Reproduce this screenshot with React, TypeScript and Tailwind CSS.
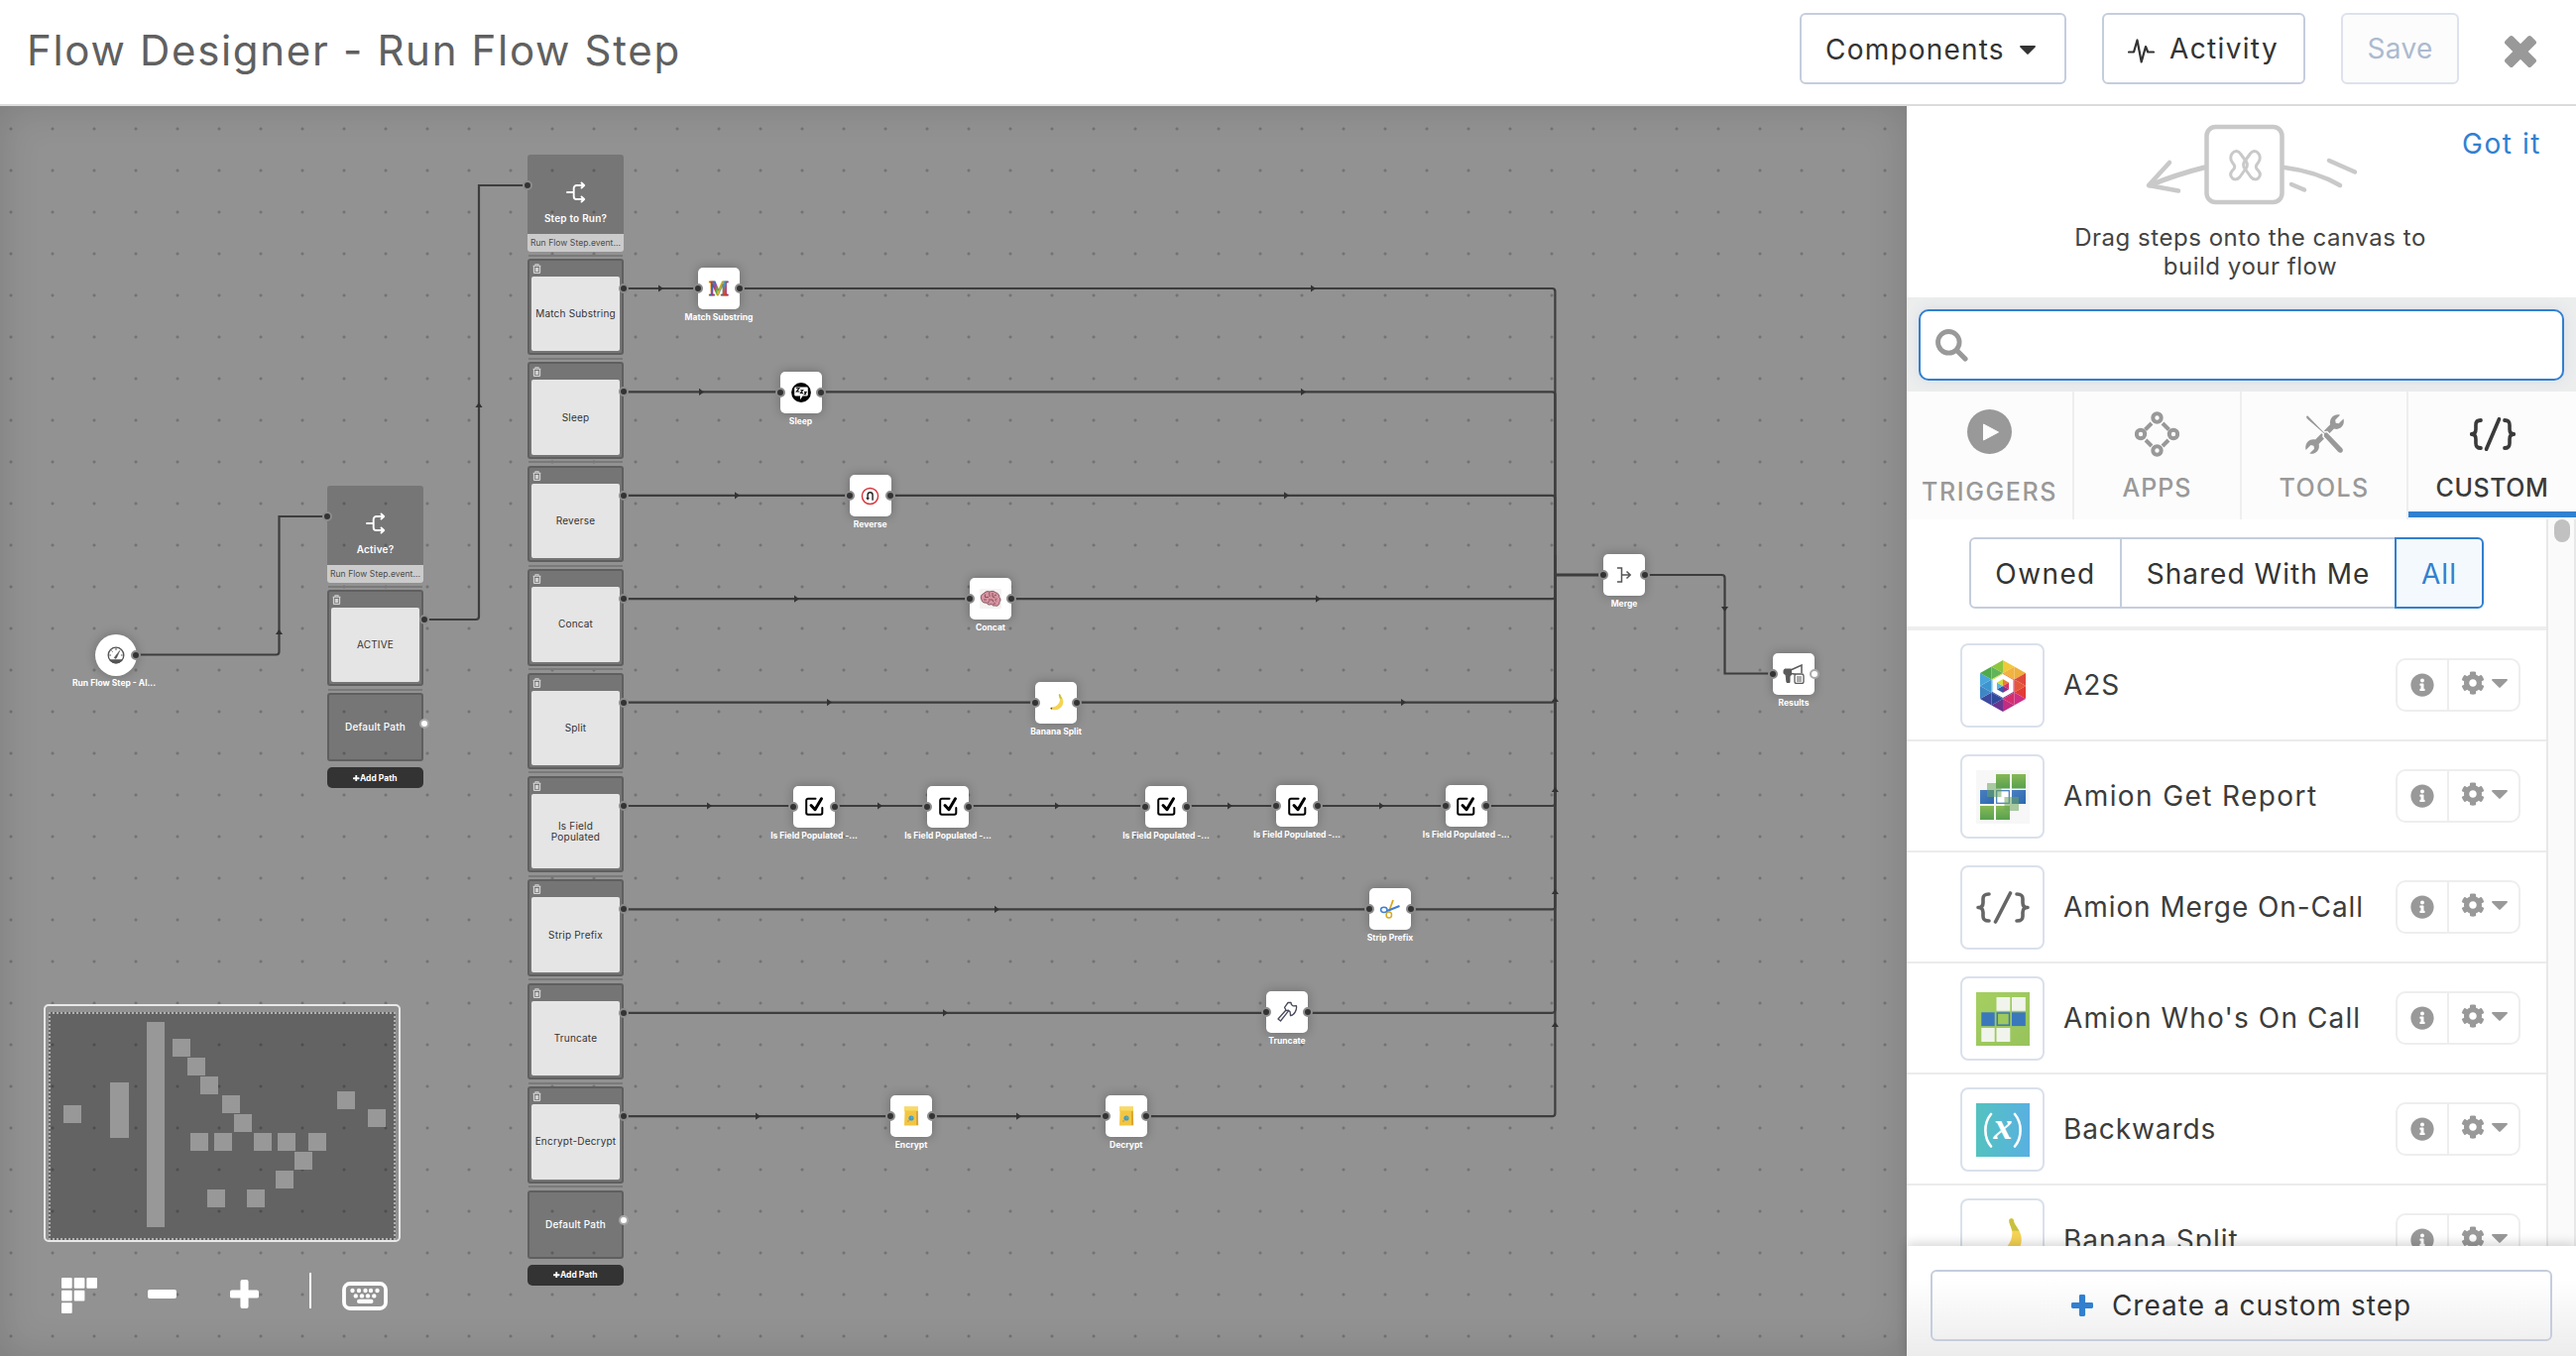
import React from 'react';
import { FaCog, FaInfoCircle } from 'react-icons/fa';

type IconProps = { className?: string };

/* ---------- Shared glyphs ---------- */

const Caret = ({ className = '' }: IconProps) => (
  <svg viewBox="0 0 16 9" className={className} fill="currentColor"><path d="M1 0h14a.9.9 0 0 1 .7 1.5L8.7 8.600a1 1 0 0 1-1.400 0L.3 1.500A.9.9 0 0 1 1 0z" /></svg>
);

const PlusGlyph = ({ className = '' }: IconProps) => (
  <svg viewBox="0 0 30 30" className={className} fill="currentColor">
    <rect x="0" y="10.800" width="30" height="8.400" rx="2" />
    <rect x="10.800" y="0" width="8.400" height="30" rx="2" />
  </svg>
);

const CodeIcon = ({ className = '', weight = 3.6 }: IconProps & { weight?: number }) => (
  <svg viewBox="0 0 54 34" preserveAspectRatio="none" className={className} fill="none" stroke="currentColor" strokeWidth={weight} strokeLinecap="round" strokeLinejoin="round">
    <path d="M13 3c-4.500 0-6 1.500-6 5v4c0 3-1.500 5-5 5 3.500 0 5 2 5 5v4c0 3.500 1.500 5 6 5" />
    <path d="M41 3c4.500 0 6 1.500 6 5v4c0 3 1.500 5 5 5-3.500 0-5 2-5 5v4c0 3.500-1.500 5-6 5" />
    <path d="M34.500 2 19.500 32" />
  </svg>
);

const SplitIcon = ({ className = '' }: IconProps) => (
  <svg viewBox="0 0 20 22" className={className} fill="none" stroke="currentColor" strokeWidth="1.900" strokeLinecap="round" strokeLinejoin="round">
    <path d="M1 11h6.500M17.500 4h-7a2.800 2.800 0 0 0-2.800 2.800v8.400a2.800 2.800 0 0 0 2.800 2.800h7M15.500 1.500l2.700 2.500-2.700 2.500M15.500 15.500l2.700 2.500-2.700 2.500" />
  </svg>
);

const TrashIcon = ({ className = '' }: IconProps) => (
  <svg viewBox="0 0 9 10" className={className} fill="none" stroke="currentColor" strokeWidth="1.100">
    <path d="M.6 2.300h7.800M3 2V.8h3V2M1.400 2.500v6.200c0 .5.3.7.7.7h4.800c.4 0 .7-.2.7-.7V2.500M3.300 4v4M4.500 4v4M5.700 4v4" />
  </svg>
);

/* ---------- Node artwork (21 x 21) ---------- */

const Gauge = () => (
  <svg viewBox="0 0 20 20" className="size-[18px]" fill="none" stroke="#555" strokeWidth="1.500">
    <circle cx="10" cy="10" r="8.700" />
    <path d="M3.800 15.500h12.400A8.500 8.500 0 0 1 10 18.600a8.500 8.500 0 0 1-6.200-3.100z" fill="#555" />
    <path d="M10 2v2.500M2.500 10h2M15.500 10h2M5 5l1.200 1.200" strokeWidth="1.100" />
    <path d="m14.300 4.800-5 6.200-1.300 2 2 .8 1.200-2z" fill="#555" strokeWidth=".6" />
  </svg>
);

const LetterM = () => (
  <svg viewBox="0 0 22 26" className="h-[26px] w-[22px]">
    <defs>
      <linearGradient id="mfill" x1="0" y1="0" x2="1" y2=".35">
        <stop offset=".05" stopColor="#f0a02c" /><stop offset=".18" stopColor="#e0402c" /><stop offset=".3" stopColor="#2f83d6" />
        <stop offset=".42" stopColor="#e0307f" /><stop offset=".54" stopColor="#58b848" /><stop offset=".66" stopColor="#f0c830" />
        <stop offset=".8" stopColor="#3a9ad8" /><stop offset=".95" stopColor="#e0402c" />
      </linearGradient>
    </defs>
    <text x="11" y="19.500" textAnchor="middle" fontFamily="Liberation Serif, serif" fontWeight="700" fontSize="20.500" fill="url(#mfill)" stroke="url(#mfill)" strokeWidth="1.200">M</text>
    <text x="11" y="19.500" textAnchor="middle" fontFamily="Liberation Serif, serif" fontWeight="700" fontSize="20.500" fill="none" stroke="#3a3030" strokeOpacity=".55" strokeWidth=".5" aria-hidden="true">M</text>
  </svg>
);

const SleepArt = () => (
  <svg viewBox="0 0 20 20" className="size-5">
    <circle cx="10" cy="10" r="9.900" fill="#000" />
    <path d="M4.500 4.600h11a1.300 1.300 0 0 1 1.300 1.300v6.300a1.300 1.300 0 0 1-1.300 1.300H11.500L9 17.200v-3.700H4.500a1.300 1.300 0 0 1-1.300-1.300V5.900a1.300 1.300 0 0 1 1.300-1.300z" fill="#fff" />
    <path d="M5 5.800h3L5.300 9h3M9.300 7.700h2.400L9.500 10.500H12M13 9.500h2l-1.800 2.300h2" fill="none" stroke="#000" strokeWidth="1.100" />
  </svg>
);

const ReverseArt = () => (
  <svg viewBox="0 0 20 20" className="size-[19px]" fill="none">
    <circle cx="10" cy="10" r="8.500" stroke="#d8343a" strokeWidth="1.500" fill="#fff" />
    <path d="M12.700 14.500V8.700a2.600 2.600 0 0 0-5.200 0v4" stroke="#222" strokeWidth="1.500" />
    <path d="M5.600 11.700h3.800l-1.900 2.800z" fill="#222" />
  </svg>
);

const BrainArt = () => (
  <svg viewBox="0 0 22 20" className="h-[20px] w-[22px]" fill="none">
    <rect width="22" height="20" rx="1" fill="#f4f3f2" />
    <path d="M2 11C.5 8.500 1.500 5.500 4 5c1-2 4-3 6-2 2-1 5-.8 6 .8 2.500.3 4 2.500 3.800 4.600 1.700 1.600 1.400 4 .2 5.100.3 2.500-2 4.500-4.300 3.500-1.700.4-3-.2-3.700-1.500-2 1.200-4.400.4-5-1.400C4.500 14.400 2 13.500 2 11z" fill="#d793a0" stroke="#6b3d49" strokeWidth=".8" />
    <path d="M5.500 5.500v3H9M7 11H4M10 3.500c-1 2 .5 2.500 0 4.500M13 4v4l2.500 1M17 6l-2.500 1M9 11h4l1 2.500M17.500 10c-1.500 0-2 1.500-1 2.500M8 14l2-1.500M13.500 15.500l2.500-1" stroke="#74424f" strokeWidth=".8" />
  </svg>
);

const BananaArt = ({ className = 'size-5' }: IconProps) => (
  <svg viewBox="0 0 20 20" className={className}>
    <path d="M12.600 1.500c.8-.6 1.500-.2 1.600.6.1 1.800 3.300 4 3 7.800-.4 5-4.800 8.600-10 8.200-1.800-.1-3.300-.9-3.400-1.700 0-.8.600-1 1.500-1.100 4.500-.6 8.500-3.800 8.300-8.800-.1-2-1.700-3.800-1-5z" fill="#f5d355" />
    <path d="M12.600 1.500c.8-.6 1.500-.2 1.600.6.1 1.200 1.200 2.400 2.100 4L13.500 6c-.2-1.700-1.600-3.500-.9-4.500z" fill="#c8c13f" />
    <path d="M4 15.700c-.8.600-.2 1.800.9 2l.7-2.100z" fill="#5d4a26" />
  </svg>
);

const CheckArt = () => (
  <svg viewBox="0 0 21 21" className="size-[21px]" fill="none" stroke="#000" strokeLinejoin="round" strokeLinecap="round">
    <path d="M11.500 2.700H4A1.800 1.800 0 0 0 2.200 4.500V17A1.800 1.800 0 0 0 4 18.800h12.500a1.800 1.800 0 0 0 1.800-1.800v-5" strokeWidth="2" />
    <path d="m7 9.500 4 4.200 6.500-10.900" strokeWidth="3" />
  </svg>
);

const ScissorsArt = () => (
  <svg viewBox="0 0 22 20" className="h-5 w-[22px]" fill="none">
    <path d="M10 12 14 1" stroke="#d9a91f" strokeWidth="1.800" /><path d="m8 12 12.500-5" stroke="#3f7fd0" strokeWidth="2" />
    <ellipse cx="9.800" cy="16" rx="2.700" ry="3" stroke="#d9a91f" strokeWidth="1.500" />
    <ellipse cx="4.800" cy="10.800" rx="3.200" ry="2.600" stroke="#3f7fd0" strokeWidth="1.500" />
  </svg>
);

const AxeArt = () => (
  <svg viewBox="0 0 22 22" className="size-[22px]" fill="#fff" stroke="#4a4a5e" strokeWidth="1.300" strokeLinejoin="round">
    <path d="m11.300 7.500 1.800 1.700L4.500 20l-2.500-2z" />
    <path d="M8.500 6.300 12 1.500h3l.4 1.900 2 1.500 3-.3c.8 3.800-1.800 9.500-5.900 10l-.4-3.800-1.700-1.700-2.200.5z" />
  </svg>
);

const BagArt = () => (
  <svg viewBox="0 0 16 20" className="h-5 w-4">
    <path d="M1 .5h14v4l-.6 1 .6 14H1l.5-14-.5-1z" fill="#f2c641" /><path d="M1 .5h14v4H1z" fill="#f7da69" /><path d="M13 5h1.800l.4 14H13z" fill="#dca52f" />
    <circle cx="8" cy="12" r="2.600" fill="#3f9ad0" /><circle cx="8.600" cy="11.500" r="1" fill="#72bb62" /><circle cx="5" cy="15" r=".8" fill="#d1853c" />
  </svg>
);

const MergeArt = () => (
  <svg viewBox="0 0 16 16" className="size-4" fill="none" stroke="#555" strokeWidth="1.500">
    <path d="M1 1h4.500v14H1M5.500 8H14M10.500 4.500 14.200 8l-3.700 3.500" />
  </svg>
);

const HornArt = () => (
  <svg viewBox="0 0 22 20" className="h-5 w-[22px]" fill="none" stroke="#5a5a5a">
    <path d="M1 6.500 2 5h6.500v6L7 12v6.500H4L3 10.500 1 9.500z" fill="#5a5a5a" />
    <path d="M8.500 5.700 19 1v8M8.500 9.500l4.500.8" strokeWidth="1.500" />
    <rect x="12" y="10" width="9" height="9.500" rx="1.800" strokeWidth="1.300" fill="#fff" />
    <path d="M14 13h5M14 15h5M14 17h5" strokeWidth="1" />
  </svg>
);

/* ---------- Flow canvas ---------- */

type FlowNode = { label: string; x: number; y: number; art: React.ReactNode; openOut?: boolean };

const nodes: FlowNode[] = [
  { label: 'Match Substring', x: 725, y: 291, art: <LetterM /> },
  { label: 'Sleep', x: 807.5, y: 395.5, art: <SleepArt /> },
  { label: 'Reverse', x: 877.7, y: 500, art: <ReverseArt /> },
  { label: 'Concat', x: 999, y: 604.3, art: <BrainArt /> },
  { label: 'Banana Split', x: 1065, y: 708.5, art: <BananaArt className="size-[19px]" /> },
  { label: 'Is Field Populated -...', x: 821, y: 813.5, art: <CheckArt /> },
  { label: 'Is Field Populated -...', x: 956, y: 813.5, art: <CheckArt /> },
  { label: 'Is Field Populated -...', x: 1176, y: 813.5, art: <CheckArt /> },
  { label: 'Is Field Populated -...', x: 1308, y: 813, art: <CheckArt /> },
  { label: 'Is Field Populated -...', x: 1478.7, y: 813, art: <CheckArt /> },
  { label: 'Strip Prefix', x: 1402, y: 917, art: <ScissorsArt /> },
  { label: 'Truncate', x: 1298, y: 1021, art: <AxeArt /> },
  { label: 'Encrypt', x: 919, y: 1126, art: <BagArt /> },
  { label: 'Decrypt', x: 1135.7, y: 1126, art: <BagArt /> },
  { label: 'Merge', x: 1638, y: 580, art: <MergeArt /> },
  { label: 'Results', x: 1809, y: 679.5, art: <HornArt />, openOut: true },
];

const branchNames = ['Match Substring', 'Sleep', 'Reverse', 'Concat', 'Split', 'Is Field Populated', 'Strip Prefix', 'Truncate', 'Encrypt-Decrypt'];
const rowYs = branchNames.map((_, i) => 291 + 104.4 * i);

const rightArrows: [number, number][] = [
  [666, 0], [1324, 0], [707, 1], [1314, 1], [743, 2], [1297, 2], [803, 3], [1329, 3], [836, 4], [1415, 4],
  [715, 5], [887, 5], [1066, 5], [1240, 5], [1393, 5], [1005, 6], [953, 7], [764, 8], [1027, 8],
];
const upArrows: [number, number][] = [[281.5, 638], [483, 409], [1568.400, 706], [1568.400, 797], [1568.400, 900], [1568.400, 1034]];

const Connectors = () => (
  <svg width="1923" height="1368" viewBox="0 0 1923 1368" className="absolute left-0 top-0" fill="none" stroke="#3d3d3d" strokeWidth="2.200">
    <path d="M137 660.500H278.500q3 0 3-3V521H330" />
    <path d="M427.500 625H480q3 0 3-3V187H532" />
    {rowYs.map((y, i) => (
      <path key={i} d={`M629 ${y}H1565.400q3 0 3 ${y < 580 ? 3 : -3}V580`} />
    ))}
    <path d="M1568.400 580H1617" strokeWidth="3" />
    <path d="M1568.400 560V700" strokeWidth="2.800" />
    <path d="M1659 580h77.500q3 0 3 3v96.500H1788" />
    <g fill="#333" stroke="none">
      {rightArrows.map(([x, row], i) => (
        <path key={i} d={`M${x - 2} ${rowYs[row] - 3.6}l5 3.600-5 3.600z`} />
      ))}
      {upArrows.map(([x, y], i) => (
        <path key={i} d={`M${x - 3.600} ${y + 2}l3.600-5 3.600 5z`} />
      ))}
      <path d="M1735.900 612l3.600 5 3.600-5z" />
    </g>
  </svg>
);

const Port = ({ x, y, open }: { x: number; y: number; open?: boolean }) => (
  <span
    className={`absolute size-[10px] rounded-full border-2 ${open ? 'border-[#a9a9a9] bg-white' : 'border-[#8c8c8c] bg-[#333]'}`}
    style={{ left: x - 5, top: y - 5 }}
  />
);

const StepNode = ({ node }: { node: FlowNode }) => (
  <div className="absolute size-[42px]" style={{ left: node.x - 21, top: node.y - 21 }}>
    <div className="flex size-full items-center justify-center rounded-[5px] bg-white shadow-[0_0_10px_1px_rgba(0,0,0,0.22)]">{node.art}</div>
    <div className="absolute left-1/2 top-[44px] -translate-x-1/2 whitespace-nowrap text-[8.5px] font-bold leading-[12px] text-white">{node.label}</div>
    <Port x={0.3} y={21} />
    <Port x={41.7} y={21} open={node.openOut} />
  </div>
);

const Rule = () => <div className="mx-px my-[2.5px] h-[2px] shrink-0 bg-[#7a7a7a]" />;

const Branch = ({ x, y, title, paths }: { x: number; y: number; title: string; paths: string[] }) => (
  <div className="absolute flex w-[97px] flex-col" style={{ left: x, top: y }}>
    <div className="flex h-[80px] flex-col items-center rounded-t-[3px] bg-black/19 pt-[27px] text-white">
      <SplitIcon className="h-[22px] w-5" />
      <div className="mt-[9px] text-[10px] font-semibold leading-[12px] tracking-[0.02em]">{title}</div>
    </div>
    <div className="flex h-[18px] items-center justify-center whitespace-nowrap rounded-b-[3px] bg-[#cbcbcb] text-[8.5px] tracking-[0.008em] text-[#4c4c4c]">Run Flow Step.event...</div>
    {paths.map((p) => (
      <React.Fragment key={p}>
        <Rule />
        <div className="flex h-[97.4px] shrink-0 flex-col rounded-[3px] border-2 border-[#5f5f5f] bg-[#757575] px-[2px] pb-[2px]">
          <TrashIcon className="ml-[1px] mt-[3px] h-[10px] w-[9px] shrink-0 text-[#d5d5d5]" />
          <div className="mt-[3px] flex flex-1 items-center justify-center rounded-[2px] bg-[#e5e5e5] text-center text-[10px] leading-[11px] tracking-[0.02em] text-[#333]">
            <span className={p.includes(' Field ') ? 'w-14' : 'whitespace-nowrap'}>{p}</span>
          </div>
        </div>
      </React.Fragment>
    ))}
    <Rule />
    <div className="flex h-[69px] items-center justify-center rounded-[3px] border-2 border-[#5f5f5f] bg-black/19 text-[10px] font-medium tracking-[0.02em] text-white">Default Path</div>
    <div className="mt-[6px] flex h-[21px] items-center justify-center rounded-[5px] bg-[#333] text-[8.5px] font-bold text-white">
      <PlusGlyph className="size-[6.5px]" />Add Path
    </div>
  </div>
);

/* Miniature of the flow: x, y, width and height of each block */
const miniBlocks: [number, number, number, number][] = [
  [64, 1115, 18, 18], [111, 1092, 19, 55.500], [148, 1031, 18, 207], [174, 1048, 18, 18], [189, 1067, 18, 18], [202, 1086, 18, 18],
  [223.500, 1105, 18, 18], [235.500, 1124, 18, 18], [191.500, 1143, 18, 18], [216, 1143, 18, 18], [256, 1143, 18, 18], [280, 1143, 18, 18],
  [310.500, 1143, 18, 18], [297, 1162, 18, 18], [278, 1181, 18, 18], [209, 1200, 18, 18], [248.500, 1200, 18, 18], [339.500, 1101, 18, 18], [370.500, 1119, 18, 18],
];

const MiniMap = () => (
  <div className="absolute left-[44px] top-[1013px] h-[240px] w-[360px] rounded-[5px] border-2 border-[#e8e8e8] px-[3px] pb-0 pt-[6px]">
    <div className="h-full w-full border-2 border-dotted border-[#b0b0b0] bg-black/32" />
    {miniBlocks.map(([x, y, w, h], i) => (
      <div key={i} className="absolute bg-[#989898]" style={{ left: x - 46, top: y - 1015, width: w, height: h }} />
    ))}
  </div>
);

const CanvasTools = () => (
  <div className="absolute left-[62px] top-[1284px] flex h-[39px] items-start text-white">
    <svg viewBox="0 0 36 36" className="mt-[5px] size-9" fill="currentColor">
      {[[0, 0], [12.700, 0], [25.300, 0], [0, 12.700], [12.700, 12.700], [0, 25.300]].map(([x, y], i) => (
        <rect key={i} x={x} y={y} width="10.700" height="10.700" rx="1" />
      ))}
    </svg>
    <div className="ml-[51px] mt-[17px] h-[9px] w-[29px] rounded-[2px] bg-white" />
    <PlusGlyph className="ml-[54px] mt-[7px] size-[29px]" />
    <div className="ml-[51px] h-9 w-[2px] bg-white" />
    <svg viewBox="0 0 46 29" className="ml-[31px] mt-[9px] h-[29px] w-[46px]" fill="currentColor">
      <rect x="2" y="2" width="42" height="25" rx="6" fill="none" stroke="currentColor" strokeWidth="3.800" />
      {[10.500, 17, 23.500, 29, 35.500].map((x) => <circle key={x} cx={x} cy="9" r="2.200" />)}
      {[13.800, 20, 26, 32.300].map((x) => <circle key={x} cx={x} cy="14.400" r="2.200" />)}
      <rect x="15" y="17.800" width="16.500" height="4.200" rx="2.100" />
    </svg>
  </div>
);

const Canvas = () => (
  <main className="relative flex-1 overflow-hidden bg-[#929292] bg-[radial-gradient(circle,#737373_1px,transparent_2px)] bg-[length:42px_42px] bg-[position:-10px_2px]">
    <div className="absolute left-0 top-[-107px] h-[1368px] w-full">
      <Branch x={330} y={490} title="Active?" paths={['ACTIVE']} />
      <Branch x={532} y={156} title="Step to Run?" paths={branchNames} />
      <Connectors />
      <Port x={330} y={521} />
      <Port x={427.500} y={625} />
      <Port x={427.500} y={729.500} open />
      <Port x={532} y={187} />
      {rowYs.map((y) => <Port key={y} x={629.300} y={y} />)}
      <Port x={629.300} y={1230.500} open />
      <div className="absolute left-[95.500px] top-[639.500px] flex size-[42px] items-center justify-center rounded-full bg-white shadow-[0_0_10px_1px_rgba(0,0,0,0.22)]"><Gauge /></div>
      <div className="absolute left-[73px] top-[683px] whitespace-nowrap text-[8.5px] font-bold leading-[12px] text-white">Run Flow Step - Al...</div>
      <Port x={137} y={660.500} />
      {nodes.map((n, i) => <StepNode key={i} node={n} />)}
      <MiniMap />
      <CanvasTools />
    </div>
    <div className="pointer-events-none absolute inset-0 shadow-[inset_0_0_40px_rgba(0,0,0,0.14)]" />
  </main>
);

/* ---------- Sidebar ---------- */

const DragIllustration = () => (
  <svg viewBox="0 0 216 84" className="h-[84px] w-[216px]" fill="none" stroke="#c9c9c9" strokeWidth="5" strokeLinecap="round" strokeLinejoin="round">
    <rect x="63.500" y="3" width="76" height="76" rx="9" strokeWidth="4.500" />
    <path d="M61 44Q33 51 6 62" /><path d="M26 39 5 62l30 5.500" strokeWidth="4.500" />
    <path d="M142 44q32 4 56 18M187 37l26 11.500M149 61l13 5.500" strokeLinecap="round" strokeWidth="4.500" />
    <g strokeWidth="3">
      <path d="M89.500 29.500c2.500-3 6-2.500 8 .5l5.500 7.500c2 2.800 2 5 0 7.500L97 53.500c-2.500 3-6 3-7.800 1-2-2-1.800-5 .3-7.500 3-3 3-4.500 0-8-2.400-2.500-2.200-7.300 0-9.500z" />
      <path d="M115.500 29.500c-2.500-3-6-2.500-8 .5l-5.500 7.500c-2 2.800-2 5 0 7.500l6 8.500c2.500 3 6 3 7.800 1 2-2 1.800-5-.3-7.500-3-3-3-4.500 0-8 2.400-2.500 2.200-7.300 0-9.500z" />
    </g>
  </svg>
);

const AppsIcon = () => (
  <svg viewBox="0 0 45 46" className="h-[46px] w-[45px]" fill="none" stroke="currentColor" strokeWidth="4">
    <circle cx="22.500" cy="6.500" r="4.200" /><circle cx="6" cy="23" r="4.200" /><circle cx="39" cy="23" r="4.200" /><circle cx="22.500" cy="39.500" r="4.200" />
    <path d="m17 12-6.500 6.500M28 12l6.500 6.500M11 29l6 6M34 29l-6 6" />
  </svg>
);

const ToolsIcon = () => (
  <svg viewBox="0 0 40 40" className="size-10" fill="currentColor">
    <path d="M30 1.300c2-1 4.500-1.200 6-.6l-4.800 5 .5 3 3 .6 4.800-4.900c.9 3.300.1 6.400-2 8.400-2.200 2.100-5 2.500-7.500 1.800L14.600 30c.7 2.500.2 5.300-1.800 7.400-2 1.900-4.800 2.800-7.500 2.100l4.800-4.800-.6-3-3-.6L1.600 36c-1-3 0-6.500 2-8.600 2.100-2 5-2.600 7.500-1.900l15-15.200c-.8-3.500.6-7.500 3.900-9z" />
    <path d="M1 1.500 3.500.5 20.500 18l2.500-.5 15.500 16c1.600 1.800 1.600 3.500.2 5s-3.500 1.600-5.200-.2L19 22.500l.3-2.700L1.800 4.500z" stroke="#fcfcfc" strokeWidth="1.600" />
  </svg>
);

const PlayIcon = () => (
  <svg viewBox="0 0 45 45" className="size-[45px]"><circle cx="22.500" cy="22.500" r="22.500" fill="currentColor" /><path d="M16.500 15v16L31.500 23z" fill="#fcfcfc" stroke="#fcfcfc" strokeLinejoin="round" /></svg>
);

const tabs = [
  { label: 'TRIGGERS', icon: <PlayIcon />, width: 'w-[169px]', box: 'mt-[18px] h-[45px]', text: 'mt-[26px] tracking-[0.064em]', active: false },
  { label: 'APPS', icon: <AppsIcon />, width: 'w-[169px]', box: 'mt-[20px] h-[46px]', text: 'mt-[19px] tracking-[0.04em]', active: false },
  { label: 'TOOLS', icon: <ToolsIcon />, width: 'w-[168px]', box: 'mt-[23px] h-[40px]', text: 'mt-[22px] tracking-[0.055em]', active: false },
  { label: 'CUSTOM', icon: <CodeIcon className="h-[34px] w-[46px]" weight={4.200} />, width: 'w-[169px]', box: 'mt-[26px] h-[34px]', text: 'mt-[25px] tracking-[0.023em]', active: true },
];

const HexArt = () => {
  const o = [[23, 0], [46, 13], [46, 39], [23, 52], [0, 39], [0, 13]];
  const m = [[34.500, 6.500], [46, 26], [34.500, 45.500], [11.500, 45.500], [0, 26], [11.500, 6.500]];
  const n = [[23, 13], [34.500, 19.500], [34.500, 32.500], [23, 39], [11.500, 32.500], [11.500, 19.500]];
  const c = [
    ['#f0c93c', '#eeb13e', '#eb7f36', '#f2b33f'], ['#df4a3c', '#e23c35', '#d6336a', '#e4573a'], ['#cf2f86', '#c02d82', '#8e3187', '#d42f6c'],
    ['#6a3590', '#3b4a9e', '#3a57a8', '#2f4a9c'], ['#3f86c6', '#4aa5dc', '#55b6df', '#3c95cf'], ['#4fa94d', '#8dc63f', '#d4dc3a', '#62b35a'],
  ];
  const pt = (...a: number[][]) => a.map((p) => p.join(',')).join(' ');
  return (
    <svg viewBox="0 0 46 52" className="h-[52px] w-[46px]">
      {o.map((_, i) => {
        const j = (i + 1) % 6;
        return (
          <g key={i}>
            <polygon points={pt(o[i], m[i], n[i])} fill={c[i][0]} />
            <polygon points={pt(m[i], n[j], n[i])} fill={c[i][3]} />
            <polygon points={pt(m[i], o[j], n[j])} fill={c[i][1]} />
            <polygon points={pt([23, 26], n[i], n[j])} fill={c[i][2]} />
          </g>
        );
      })}
      <polygon points="23,16.500 31.300,21.300 31.300,30.700 23,35.500 14.700,30.700 14.700,21.300" fill="none" stroke="#fff" strokeWidth="4.500" />
    </svg>
  );
};

const AmionReportArt = () => (
  <svg viewBox="0 0 54 54" className="size-[54px]">
    <defs>
      <linearGradient id="ag" x1="0" y1="0" x2="0" y2="1"><stop offset="0" stopColor="#86b956" /><stop offset="1" stopColor="#58a04f" /></linearGradient>
      <linearGradient id="ab" x1="0" y1="0" x2="1" y2="1"><stop offset="0" stopColor="#4a7fc0" /><stop offset="1" stopColor="#2c69b0" /></linearGradient>
    </defs>
    <rect width="54" height="54" fill="#f7f7f7" />
    <g fill="url(#ag)"><rect x="20" y="4" width="14" height="14.500" /><rect x="36" y="4" width="14" height="14.500" /><rect x="4" y="36" width="14" height="14" /><rect x="20" y="36" width="14" height="14" /></g>
    <rect x="4" y="20" width="14" height="14" fill="url(#ab)" /><rect x="36" y="20" width="14" height="14" fill="url(#ab)" />
    <rect x="20.700" y="20.700" width="12.600" height="12.600" fill="#fff" stroke="#3d76b8" strokeWidth="1.200" />
    <g fill="#6aa45a" fillOpacity=".55"><rect x="11" y="13" width="14.500" height="14" /><rect x="28.500" y="27" width="14.500" height="14" /></g>
  </svg>
);

const AmionCallArt = () => (
  <svg viewBox="0 0 54 54" className="size-[54px]">
    <defs><linearGradient id="acg" x1="0" y1="0" x2="1" y2="1"><stop offset="0" stopColor="#a5cf60" /><stop offset="1" stopColor="#97c35c" /></linearGradient></defs>
    <rect width="54" height="54" fill="url(#acg)" />
    <g fill="#f1f4ec"><rect x="20.500" y="5" width="13.800" height="13.800" /><rect x="36" y="5" width="13.800" height="13.800" /><rect x="5.300" y="36" width="13.400" height="14" /><rect x="20.500" y="36" width="13.800" height="14" /></g>
    <rect x="5.300" y="20.300" width="13.400" height="13.800" fill="#3a77bb" /><rect x="36" y="20.300" width="13.800" height="13.800" fill="#3a77bb" />
    <rect x="21.300" y="21" width="12.200" height="12.200" fill="none" stroke="#3a77bb" strokeWidth="1.500" />
  </svg>
);

const BackwardsArt = () => (
  <div className="flex size-[54px] items-center justify-center bg-gradient-to-r from-[#54c2bf] to-[#59b0e1]">
    <svg viewBox="0 0 54 54" className="size-[54px]">
      <g fill="none" stroke="#fff" strokeWidth="2.600" strokeLinecap="round"><path d="M15 11c-7.500 9-7.500 23.500 0 32.500M39 11c7.500 9 7.500 23.500 0 32.500" /></g>
      <text x="27" y="36" textAnchor="middle" fontFamily="Liberation Serif, serif" fontStyle="italic" fontWeight="700" fontSize="38" fill="#fff">x</text>
    </svg>
  </div>
);

const steps = [
  { name: 'A2S', art: <HexArt />, track: 'tracking-[0.031em]' },
  { name: 'Amion Get Report', art: <AmionReportArt />, track: 'tracking-[0.05em]' },
  { name: 'Amion Merge On-Call', art: <CodeIcon className="h-[33px] w-[54px] text-[#666]" />, track: 'tracking-[0.033em]' },
  { name: "Amion Who's On Call", art: <AmionCallArt />, track: 'tracking-[0.04em]' },
  { name: 'Backwards', art: <BackwardsArt />, track: 'tracking-[0.032em]' },
  { name: 'Banana Split', art: <BananaArt className="size-[52px]" />, track: 'tracking-[0.037em]' },
];

const Sidebar = () => (
  <aside className="relative z-10 flex w-[675px] shrink-0 flex-col bg-white">
    <div className="relative flex h-[193px] shrink-0 flex-col items-center pl-[18px] pt-[18px]">
      <DragIllustration />
      <p className="mt-[16px] text-center text-[24px] leading-[29px] tracking-[0.022em] text-[#444]">
        Drag steps onto the canvas to<br />build your flow
      </p>
      <a className="absolute right-[35px] top-[21px] text-[28px] leading-[34px] tracking-[0.055em] text-[#3180d0]">Got it</a>
    </div>
    <div className="h-[95px] shrink-0 bg-[#eceded] px-3 pt-3">
      <div className="flex h-[72px] items-center rounded-[10px] border-2 border-[#3180d0] bg-white pl-[15px] shadow-[0_0_14px_rgba(49,100,180,0.10)]">
        <svg viewBox="0 0 33 33" className="size-[33px]" fill="none" stroke="#999" strokeLinecap="round"><circle cx="13.300" cy="13.300" r="10.800" strokeWidth="4.800" /><path d="m22 22 8 8" strokeWidth="5.200" /></svg>
      </div>
    </div>
    <div className="flex h-[129px] shrink-0 bg-[#fcfcfc]">
      {tabs.map((t) => (
        <div key={t.label} className={`relative flex shrink-0 flex-col items-center border-[#eee] ${t.width} ${t.active ? 'text-[#3a3a3a]' : 'border-r-2 text-[#999]'}`}>
          <div className={`flex items-center ${t.box}`}>{t.icon}</div>
          <span className={`text-[25px] font-medium leading-[24px] ${t.text}`}>{t.label}</span>
          {t.active && <div className="absolute inset-x-0 bottom-[2px] h-[6px] bg-[#3180d0]" />}
        </div>
      ))}
    </div>
    <div className="flex h-[733px] shrink-0 overflow-hidden">
      <div className="flex w-[645px] flex-col">
        <div className="flex h-[112px] shrink-0 justify-center border-b-4 border-[#eee] pt-[18px] text-[28px] text-[#333]">
          <div className="flex h-[72px] w-[519px] leading-[70px]">
            <div className="w-[154px] rounded-l-[6px] border-2 border-[#c5cddd] text-center tracking-[0.05em]">Owned</div>
            <div className="w-[275px] border-y-2 border-[#c5cddd] text-center tracking-[0.037em]">Shared With Me</div>
            <div className="w-[90px] rounded-r-[6px] border-2 border-[#3180d0] bg-[#f4f9fd] text-center tracking-[0.037em] text-[#3180d0]">All</div>
          </div>
        </div>
        {steps.map((s) => (
          <div key={s.name} className="flex h-[112px] shrink-0 items-start border-b-2 border-[#ebebeb] pl-[54px]">
            <div className="mt-[13px] flex size-[85px] shrink-0 items-center justify-center rounded-[8px] border-2 border-[#dae0ec]">{s.art}</div>
            <span className={`ml-[19px] mt-[37px] flex-1 whitespace-nowrap text-[28px] leading-[36px] text-[#3c3c3c] ${s.track}`}>{s.name}</span>
            <div className="mr-[26px] mt-[28px] flex h-[54px] w-[126px] shrink-0 items-center rounded-[10px] border-2 border-[#eee] text-[#999]">
              <div className="flex h-full w-[52px] items-center justify-center border-r-2 border-[#eee]"><FaInfoCircle size={24} /></div>
              <FaCog size={24} className="mb-1 ml-[12px]" />
              <Caret className="mb-1 ml-[7px] h-[9px] w-4" />
            </div>
          </div>
        ))}
      </div>
      <div className="flex-1 border-x-2 border-[#e8e8e8] bg-[#fafafa] pl-[6px]">
        <div className="h-[23px] w-4 rounded-full bg-[#c1c1c1]" />
      </div>
    </div>
    <div className="relative flex-1 bg-gradient-to-b from-white from-30% to-[#ececec] px-6 pt-6 shadow-[0_-3px_10px_rgba(0,0,0,0.16)]">
      <div className="flex h-[72px] items-center justify-center rounded-[6px] border-2 border-[#c5cddd] text-[28px] tracking-[0.036em] text-[#333]">
        <PlusGlyph className="mr-[19px] size-[22px] text-[#3180d0]" />Create a custom step
      </div>
    </div>
  </aside>
);

const Header = () => (
  <header className="flex h-[107px] shrink-0 items-start border-b-2 border-[#dcdcdc] bg-white pl-[27px] pr-[39px] pt-[13px] text-[28px] text-[#333]">
    <h1 className="mt-[2px] flex-1 text-[42px] leading-[72px] tracking-[0.04em] text-[#606060]">Flow Designer - Run Flow Step</h1>
    <div className="flex h-[72px] w-[269px] items-center rounded-[6px] border-2 border-[#c5cddd] pl-[24px] pt-0.5 tracking-[0.043em]">
      Components<Caret className="ml-[15px] h-[9px] w-4" />
    </div>
    <div className="ml-9 flex h-[72px] w-[205px] items-center rounded-[6px] border-2 border-[#c5cddd] pl-[24px] tracking-[0.048em]">
      <svg viewBox="0 0 27 26" className="mr-[15px] mt-1 h-[26px] w-[27px] shrink-0" fill="none" stroke="currentColor" strokeWidth="2.200" strokeLinejoin="round" strokeLinecap="round"><path d="M1 14.500h5l3.500-12 4.200 22L18 9l2.200 5.500H26" /></svg>
      Activity
    </div>
    <div className="ml-9 flex h-[72px] w-[119px] items-center justify-center rounded-[6px] border-2 border-[#dde2ec] bg-[#fcfcfc] tracking-[0.011em] text-[#adbacf]">Save</div>
    <svg viewBox="0 0 34 34" className="ml-[45px] mt-[22px] size-[34px]" fill="#999">
      <rect x="-1.500" y="11.500" width="37" height="11" rx="2.500" transform="rotate(45 17 17)" />
      <rect x="-1.500" y="11.500" width="37" height="11" rx="2.500" transform="rotate(-45 17 17)" />
    </svg>
  </header>
);

export default function App() {
  return (
    <div className="flex h-[1368px] w-[2598px] flex-col overflow-hidden font-[Inter,sans-serif] font-[430]">
      <Header />
      <div className="flex h-[1261px]">
        <Canvas />
        <Sidebar />
      </div>
    </div>
  );
}
